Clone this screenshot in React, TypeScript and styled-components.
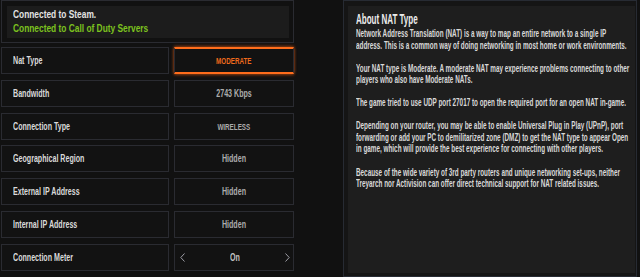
import React from "react";
import styled, { createGlobalStyle } from "styled-components";

// No condensed face is installed, so the game font's narrow letters are
// imitated with bold Liberation Sans squeezed horizontally.

const GlobalStyle = createGlobalStyle`
  html, body {
    margin: 0;
    background: #111111;
  }
  body {
    font-family: "Liberation Sans", Arial, sans-serif;
    font-weight: 700;
    color: #d6d6d6;
    overflow: hidden;
  }
`;

const Screen = styled.div`
  display: flex;
  align-items: flex-start;
  width: 640px;
  height: 277px;
  padding-left: 1px;
  box-sizing: border-box;
  overflow: hidden;
`;

const Settings = styled.div`
  width: 293px;
  display: flex;
  flex-direction: column;
  gap: 4px;
`;

const StatusBox = styled.div`
  box-sizing: border-box;
  height: 43px;
  border: 1px solid #2a2b31;
  padding: 5px 4px 4px 5px;
`;

const StatusInner = styled.div`
  height: 32px;
  box-sizing: border-box;
  background: #1c1c1c;
  padding: 1px 6px 0;
`;

const StatusLine = styled.div<{ $ok?: boolean }>`
  font-size: 11px;
  line-height: 14px;
  white-space: nowrap;
  color: ${(p) => (p.$ok ? "#7cc21f" : "#e2e2e2")};
  transform: scaleX(0.76);
  transform-origin: left center;
`;

const RowList = styled.div`
  display: flex;
  flex-direction: column;
  gap: 5.8px;
`;

const Row = styled.div`
  display: grid;
  grid-template-columns: 168px 1fr;
  gap: 5px;
  height: 27px;
`;

const Cell = styled.div`
  box-sizing: border-box;
  border: 1px solid #2a2b31;
  background: #121212;
  display: flex;
  align-items: center;
`;

const Label = styled(Cell)`
  padding-left: 11px;
  font-size: 10px;
  color: #dadada;
`;

const LabelText = styled.span`
  display: inline-block;
  white-space: nowrap;
  transform: scaleX(0.71);
  transform-origin: left center;
`;

const Value = styled(Cell)<{ $active?: boolean }>`
  justify-content: center;
  color: ${(p) => (p.$active ? "#ee6a1c" : "#acacac")};
  ${(p) =>
    p.$active &&
    `
    border-top: 2px solid #ff6d1c;
    border-bottom: 2px solid #ff6d1c;
    box-shadow: 0 -1px 3px rgba(255, 105, 25, 0.45), 0 1px 3px rgba(255, 105, 25, 0.45);
  `}
`;

const ValueText = styled.span<{ $caps?: boolean }>`
  display: inline-block;
  white-space: nowrap;
  font-size: ${(p) => (p.$caps ? "9.5px" : "10px")};
  transform: scaleX(${(p) => (p.$caps ? 0.66 : 0.71)});
  transform-origin: center;
`;

const Stepper = styled(Value)`
  justify-content: space-between;
  padding: 0 3px 0 5px;
  color: #c4c4c4;
`;

const Chevron = styled.svg`
  width: 5px;
  height: 9px;
  display: block;
`;

const AboutPanel = styled.section`
  box-sizing: border-box;
  margin-left: 49px;
  width: 294px;
  height: 277px;
  border: 1px solid #272b33;
  background: #151515;
  padding: 5px 1px 3px 4px;
  display: flex;
`;

const AboutBody = styled.div`
  flex: 1;
  background: #1e1e1e;
  padding: 4px 8px;
  overflow: hidden;
`;

const Title = styled.h2`
  margin: 0;
  font-size: 15px;
  line-height: 18px;
  font-weight: 700;
  color: #ececec;
  white-space: nowrap;
  transform: scaleX(0.535);
  transform-origin: left center;
`;

const Copy = styled.div`
  font-size: 10px;
  line-height: 11.55px;
  color: #d9d9d9;
  white-space: nowrap;
  transform: scaleX(0.635);
  transform-origin: left top;
`;

const Para = styled.p`
  margin: 0 0 11.55px;
`;

const settings = [
  { label: "Nat Type", value: "MODERATE", active: true, caps: true },
  { label: "Bandwidth", value: "2743 Kbps" },
  { label: "Connection Type", value: "WIRELESS", caps: true },
  { label: "Geographical Region", value: "Hidden" },
  { label: "External IP Address", value: "Hidden" },
  { label: "Internal IP Address", value: "Hidden" },
];

const about = [
  [
    "Network Address Translation (NAT) is a way to map an entire network to a single IP",
    "address. This is a common way of doing networking in most home or work environments.",
  ],
  [
    "Your NAT type is Moderate. A moderate NAT may experience problems connecting to other",
    "players who also have Moderate NATs.",
  ],
  ["The game tried to use UDP port 27017 to open the required port for an open NAT in-game."],
  [
    "Depending on your router, you may be able to enable Universal Plug in Play (UPnP), port",
    "forwarding or add your PC to demilitarized zone (DMZ) to get the NAT type to appear Open",
    "in game, which will provide the best experience for connecting with other players.",
  ],
  [
    "Because of the wide variety of 3rd party routers and unique networking set-ups, neither",
    "Treyarch nor Activision can offer direct technical support for NAT related issues.",
  ],
];

const ChevronLeft = () => (
  <Chevron viewBox="0 0 5 9">
    <path d="M4.5 0.5 L0.8 4.5 L4.5 8.5" fill="none" stroke="#9c9ca4" strokeWidth="1" />
  </Chevron>
);

const ChevronRight = () => (
  <Chevron viewBox="0 0 5 9">
    <path d="M0.5 0.5 L4.2 4.5 L0.5 8.5" fill="none" stroke="#9c9ca4" strokeWidth="1" />
  </Chevron>
);

export default function App() {
  return (
    <>
      <GlobalStyle />
      <Screen>
        <Settings>
          <StatusBox>
            <StatusInner>
              <StatusLine>Connected to Steam.</StatusLine>
              <StatusLine $ok>Connected to Call of Duty Servers</StatusLine>
            </StatusInner>
          </StatusBox>
          <RowList>
            {settings.map((s) => (
              <Row key={s.label}>
                <Label>
                  <LabelText>{s.label}</LabelText>
                </Label>
                <Value $active={s.active}>
                  <ValueText $caps={s.caps}>{s.value}</ValueText>
                </Value>
              </Row>
            ))}
            <Row>
              <Label>
                <LabelText>Connection Meter</LabelText>
              </Label>
              <Stepper>
                <ChevronLeft />
                <ValueText>On</ValueText>
                <ChevronRight />
              </Stepper>
            </Row>
          </RowList>
        </Settings>
        <AboutPanel>
          <AboutBody>
            <Title>About NAT Type</Title>
            <Copy>
              {about.map((lines, i) => (
                <Para key={i}>
                  {lines.map((l, j) => (
                    <React.Fragment key={j}>
                      {l}
                      {j < lines.length - 1 && <br />}
                    </React.Fragment>
                  ))}
                </Para>
              ))}
            </Copy>
          </AboutBody>
        </AboutPanel>
      </Screen>
    </>
  );
}
